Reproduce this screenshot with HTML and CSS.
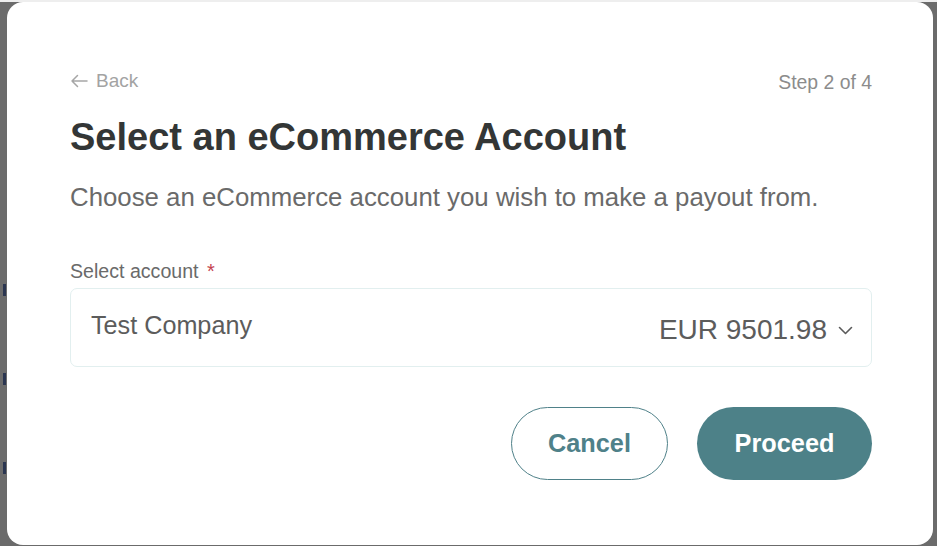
FILE: index.html
```html
<!DOCTYPE html>
<html lang="en">
<head>
<meta charset="utf-8">
<title>Select an eCommerce Account</title>
<link rel="stylesheet" href="styles.css">
</head>
<body>
<div class="backdrop">
  <div class="side-marks">
    <span class="mark m1"></span>
    <span class="mark m2"></span>
    <span class="mark m3"></span>
  </div>
  <div class="modal">
    <div class="top-row">
      <a class="back" href="#">
        <svg class="back-icon" width="18" height="14" viewBox="0 0 18 14" aria-hidden="true">
          <path d="M17 7H2M7.5 1.5 2 7l5.5 5.5" fill="none" stroke="#a6a6a6" stroke-width="1.5" stroke-linecap="round" stroke-linejoin="round"/>
        </svg>
        <span>Back</span>
      </a>
      <span class="step">Step 2 of 4</span>
    </div>
    <h1 class="title">Select an eCommerce Account</h1>
    <p class="subtitle">Choose an eCommerce account you wish to make a payout from.</p>
    <label class="label">Select account <span class="req">*</span></label>
    <div class="select">
      <span class="company">Test Company</span>
      <span class="amount">EUR 9501.98
        <svg class="chev" width="15" height="9" viewBox="0 0 15 9" aria-hidden="true">
          <path d="M1.5 1.5 7.5 7.5l6-6" fill="none" stroke="#5a5a5a" stroke-width="1.6" stroke-linecap="round" stroke-linejoin="round"/>
        </svg>
      </span>
    </div>
    <div class="actions">
      <button class="btn btn-outline">Cancel</button>
      <button class="btn btn-solid">Proceed</button>
    </div>
  </div>
</div>
</body>
</html>
```
FILE: styles.css
```css
* { box-sizing: border-box; }
html, body { margin: 0; padding: 0; }
body {
  width: 937px;
  height: 546px;
  overflow: hidden;
  font-family: "Liberation Sans", Arial, Helvetica, sans-serif;
  background: linear-gradient(#eeeeee 0 2px, #6b6b6b 2px);
}
.backdrop {
  position: relative;
  height: 546px;
  padding: 2px 4px 1px 7px;
}
.side-marks { position: absolute; left: 0; top: 0; width: 7px; height: 546px; }
.mark { position: absolute; left: 3px; width: 3px; height: 12px; background: #2a3550; }
.m1 { top: 284px; }
.m2 { top: 373px; }
.m3 { top: 462px; }
.modal {
  position: relative;
  height: 543px;
  background: #ffffff;
  border-radius: 16px;
  padding: 69px 61px 0 63px;
}
.top-row {
  display: flex;
  justify-content: space-between;
  align-items: center;
  height: 20px;
}
.back {
  display: flex;
  align-items: center;
  gap: 8px;
  color: #a3a3a3;
  font-size: 19px;
  text-decoration: none;
}
.back-icon { display: block; }
.step {
  color: #8c8c8c;
  font-size: 19.4px;
  margin-top: 2px;
}
.title {
  margin: 24px 0 0;
  font-size: 38px;
  font-weight: 700;
  color: #333636;
  line-height: 44px;
}
.subtitle {
  margin: 22px 0 0;
  font-size: 25.8px;
  color: #6a6a6a;
  line-height: 32px;
}
.label {
  display: block;
  margin-top: 47px;
  font-size: 19.6px;
  color: #6a6a6a;
  line-height: 22px;
}
.req { color: #c4434f; font-size: 20px; margin-left: 3px; }
.select {
  margin-top: 6px;
  height: 79px;
  border: 1px solid #e2efef;
  border-radius: 7px;
  display: flex;
  justify-content: space-between;
  align-items: center;
  padding: 0 18px 0 20px;
}
.company {
  font-size: 25.2px;
  color: #5c5c5c;
  margin-top: -5px;
}
.amount {
  display: flex;
  align-items: center;
  gap: 11px;
  font-size: 28px;
  color: #5c5c5c;
  margin-top: 5px;
}
.chev { display: block; }
.actions {
  display: flex;
  justify-content: flex-end;
  gap: 29px;
  margin-top: 40px;
}
.btn {
  height: 73px;
  border-radius: 37px;
  font-family: inherit;
  font-size: 25.3px;
  font-weight: 700;
  cursor: pointer;
  padding: 0;
}
.btn-outline {
  width: 157px;
  background: #ffffff;
  border: 1.5px solid #4f8189;
  color: #4f8189;
}
.btn-solid {
  width: 175px;
  background: #4d8188;
  border: none;
  color: #ffffff;
}
```
